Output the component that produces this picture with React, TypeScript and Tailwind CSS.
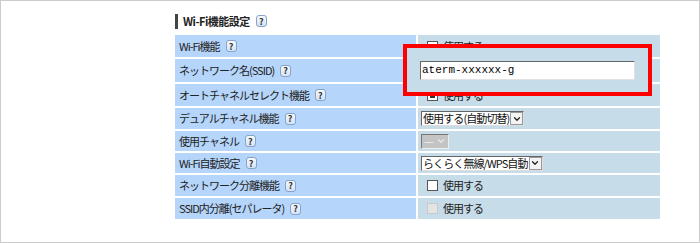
import { ChevronDown } from "lucide-react";

const font = { fontFamily: '"Noto Sans CJK JP", "Noto Sans", sans-serif' };

const Help = () => (
  <span className="ml-[6px] inline-flex h-[12px] w-[11px] items-center justify-center rounded-[3px] border border-[#86a3c9] bg-gradient-to-b from-[#f6f9fd] to-[#d3e3f6] text-[9px] font-bold leading-none tracking-normal text-[#333]">
    ?
  </span>
);

const Check = ({ checked = false, disabled = false }: { checked?: boolean; disabled?: boolean }) => (
  <span
    className={
      disabled
        ? "inline-block h-[11px] w-[11px] border border-[#c9c9c9] bg-[#e4e4e4]"
        : "inline-flex h-[11px] w-[11px] items-center justify-center border border-[#555] bg-white"
    }
  >
    {checked && <span className="h-[5px] w-[5px] bg-[#333]" />}
  </span>
);

const Select = ({ text, disabled = false }: { text: string; disabled?: boolean }) => (
  <span
    className={
      disabled
        ? "flex h-[15px] items-center border border-t-[#777] border-l-[#777] border-b-[#eee] border-r-[#eee] bg-[#c4c4c4]"
        : "flex h-[15px] items-center border border-t-[#666] border-l-[#666] border-b-[#ddd] border-r-[#ddd] bg-white"
    }
  >
    <span className={disabled ? "px-[2px] text-[11px] text-[#eee]" : "whitespace-nowrap pl-[1px] pr-[1px] text-[11px] tracking-[-0.9px] text-[#111]"}>
      {text}
    </span>
    <span
      className={
        disabled
          ? "flex h-[13px] w-[13px] items-center justify-center"
          : "flex h-[13px] w-[13px] items-center justify-center border border-[#999] bg-[#f4f4f4]"
      }
    >
      <ChevronDown className={disabled ? "h-[10px] w-[10px] text-[#e8e8e8]" : "h-[10px] w-[10px] text-[#222]"} strokeWidth={3} />
    </span>
  </span>
);

const rows: { label: string; h: string; value: React.ReactNode }[] = [
  {
    label: "Wi-Fi機能",
    h: "h-[22px]",
    value: (
      <div className="flex items-center gap-[5px] pl-[9px]">
        <Check />
        <span>使用する</span>
      </div>
    ),
  },
  { label: "ネットワーク名(SSID)", h: "h-[23px]", value: null },
  {
    label: "オートチャネルセレクト機能",
    h: "h-[22px]",
    value: (
      <div className="flex items-center gap-[5px] pl-[9px]">
        <Check checked />
        <span>使用する</span>
      </div>
    ),
  },
  {
    label: "デュアルチャネル機能",
    h: "h-[21px]",
    value: (
      <div className="flex pl-[3px]">
        <Select text="使用する(自動切替)" />
      </div>
    ),
  },
  {
    label: "使用チャネル",
    h: "h-[20px]",
    value: (
      <div className="flex pl-[3px]">
        <Select text="—" disabled />
      </div>
    ),
  },
  {
    label: "Wi-Fi自動設定",
    h: "h-[20px]",
    value: (
      <div className="flex pl-[3px]">
        <Select text="らくらく無線/WPS自動" />
      </div>
    ),
  },
  {
    label: "ネットワーク分離機能",
    h: "h-[21px]",
    value: (
      <div className="flex items-center gap-[5px] pl-[9px]">
        <Check />
        <span>使用する</span>
      </div>
    ),
  },
  {
    label: "SSID内分離(セパレータ)",
    h: "h-[21px]",
    value: (
      <div className="flex items-center gap-[5px] pl-[9px]">
        <Check disabled />
        <span>使用する</span>
      </div>
    ),
  },
];

const App = () => {
  return (
    <div
      className="relative h-[243px] w-[700px] overflow-hidden border border-[#cccccc] bg-white text-[11px] text-[#222]"
      style={font}
    >
      <div className="pl-[174px] pt-[12px]">
        <div className="flex h-[16px] items-center">
          <span className="h-[15px] w-[3px] bg-[#444]" />
          <span className="ml-[5px] text-[11px] font-bold tracking-[-0.5px] text-[#222]">Wi-Fi機能設定</span>
          <Help />
        </div>
        <div className="mt-[6px] grid w-[485px] grid-cols-[241px_242px] gap-[2px] tracking-[-1px]">
          {rows.map((row) => (
            <div key={row.label} className="contents">
              <div className={`${row.h} flex items-center bg-[#b5d5fb] pl-[4px]`}>
                <span>{row.label}</span>
                <Help />
              </div>
              <div className={`${row.h} flex items-center bg-[#c6dce9]`}>{row.value}</div>
            </div>
          ))}
        </div>
      </div>

      {/* callout over the SSID row */}
      <div className="absolute left-[402px] top-[43px] flex h-[52px] w-[249px] items-center justify-center border-4 border-[#ff0000] bg-[#c6dce9]">
        <div className="flex h-[19px] w-[215px] items-center border border-t-[#666] border-l-[#666] border-b-[#e2e2e2] border-r-[#e2e2e2] bg-white pl-[1px]">
          <span className="text-[11px] text-black" style={{ fontFamily: '"Liberation Mono", monospace' }}>
            aterm-xxxxxx-g
          </span>
        </div>
      </div>
    </div>
  );
};

export default App;
